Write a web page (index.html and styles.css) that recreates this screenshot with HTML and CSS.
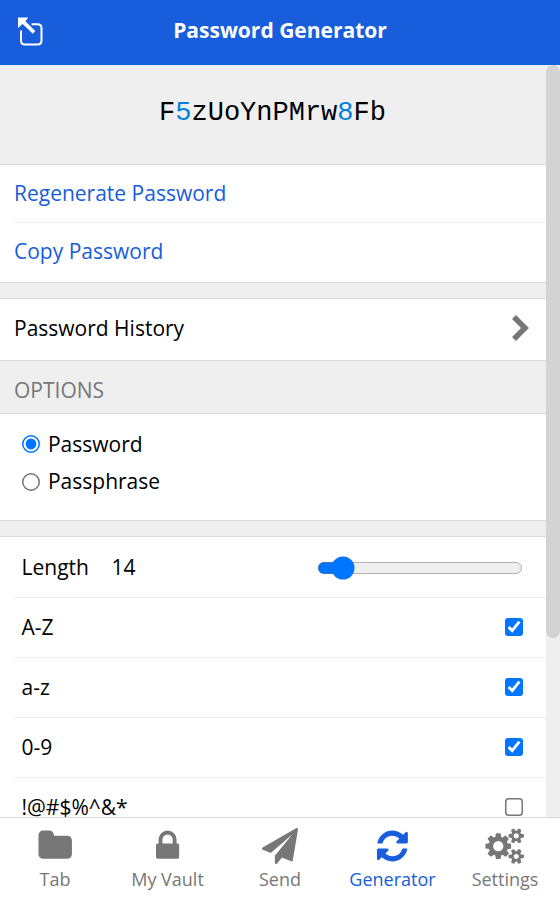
FILE: index.html
```html
<!DOCTYPE html>
<html lang="en">
<head>
<meta charset="utf-8">
<title>Password Generator</title>
<link rel="stylesheet" href="styles.css">
</head>
<body>
<header class="header">
  <button class="popout" aria-label="Pop out">
    <svg width="28" height="30" viewBox="0 0 28 30"><path d="M14.500 7.300H20.500Q24.500 7.300 24.500 11.300V23.500Q24.500 27.500 20.500 27.500H8Q4 27.500 4 23.500V13.500" fill="none" stroke="#fff" stroke-width="2"/><path d="M1 .5H11.300L8.400 4.300 18.300 14 15.800 16.700 5.600 7 1 11Z" fill="#fff"/></svg>
  </button>
  <h1 class="title">Password Generator</h1>
</header>
<div class="body">
  <main class="content">
    <div class="password">F<span class="digit">5</span>zUoYnPMrw<span class="digit">8</span>Fb</div>
    <section class="box">
      <a class="row action">Regenerate Password</a>
      <a class="row action last">Copy Password</a>
    </section>
    <section class="box spaced">
      <a class="row history last">Password History
        <svg class="chevron" viewBox="0 0 18 28"><path d="M3 3 14 14 3 25" fill="none" stroke="#777" stroke-width="5.600"/></svg>
      </a>
    </section>
    <h2 class="section-title">OPTIONS</h2>
    <section class="box types">
      <label class="type"><input class="radio" type="radio" name="type" checked>Password</label>
      <label class="type"><input class="radio low" type="radio" name="type">Passphrase</label>
    </section>
    <section class="box spaced">
      <label class="row option"><span class="name">Length</span><span>14</span><input class="range" type="range" min="5" max="120" value="14"></label>
      <label class="row option">A-Z<input class="check" type="checkbox" checked></label>
      <label class="row option">a-z<input class="check" type="checkbox" checked></label>
      <label class="row option">0-9<input class="check" type="checkbox" checked></label>
      <label class="row option">!@#$%^&amp;*<input class="check" type="checkbox"></label>
    </section>
  </main>
  <div class="scrollbar"><div class="thumb"></div></div>
</div>
<nav class="tabs">
  <a class="tab"><svg class="icon" viewBox="40 0 1664 1792"><path d="M1728 608v704q0 92-66 158t-158 66h-1216q-92 0-158-66t-66-158v-960q0-92 66-158t158-66h320q92 0 158 66t66 158v32h672q92 0 158 66t66 158z"/></svg>Tab</a>
  <a class="tab"><svg class="icon" viewBox="320 0 1152 1792"><path d="M640 768h512v-192q0-106-75-181t-181-75-181 75-75 181v192zm832 96v576q0 40-28 68t-68 28h-960q-40 0-68-28t-28-68v-576q0-40 28-68t68-28h32v-192q0-184 132-316t316-132 316 132 132 316v192h32q40 0 68 28t28 68z"/></svg>My Vault</a>
  <a class="tab"><svg class="icon" viewBox="0 0 1792 1792"><path d="M1764 11q33 24 27 64l-256 1536q-5 29-32 45-14 8-31 8-11 0-24-5l-453-185-242 295q-18 23-49 23-13 0-22-4-19-7-30.500-23.500t-11.500-36.500v-349l864-1059-1069 925-395-162q-37-14-40-55-2-40 32-59l1664-960q15-9 32-9 20 0 36 11z"/></svg>Send</a>
  <a class="tab active"><svg class="icon" viewBox="128 0 1536 1792"><path d="M1639 1056q0 5-1 7-64 268-268 434.500t-478 166.500q-146 0-282.500-55t-243.500-157l-129 129q-19 19-45 19t-45-19-19-45v-448q0-26 19-45t45-19h448q26 0 45 19t19 45-19 45l-137 137q71 66 161 102t187 36q134 0 250-65t186-179q11-17 53-117 8-23 30-23h192q13 0 22.500 9.500t9.500 22.500zm25-800v448q0 26-19 45t-45 19h-448q-26 0-45-19t-19-45 19-45l138-138q-148-137-349-137-134 0-250 65t-186 179q-11 17-53 117-8 23-30 23h-199q-13 0-22.500-9.500t-9.500-22.500v-7q65-268 270-434.500t480-166.500q146 0 284 55.500t245 156.500l130-129q19-19 45-19t45 19 19 45z"/></svg>Generator</a>
  <a class="tab"><svg class="icon" viewBox="30 55 1920 1792"><path d="M896 960q0-106-75-181t-181-75-181 75-75 181 75 181 181 75 181-75 75-181zm768 512q0-52-38-90t-90-38-90 38-38 90q0 53 37.500 90.500t90.500 37.500 90.500-37.500 37.500-90.500zm0-1024q0-52-38-90t-90-38-90 38-38 90q0 53 37.500 90.500t90.500 37.500 90.500-37.500 37.500-90.500zm-384 421v185q0 10-7 19.500t-16 10.500l-155 24q-11 35-32 76 34 48 90 115 7 11 7 20 0 12-7 19-23 30-82.500 89.500t-78.500 59.500q-11 0-21-7l-115-90q-37 19-77 31-11 108-23 155-7 24-30 24h-186q-11 0-20-7.500t-10-17.500l-23-153q-34-10-75-31l-118 89q-7 7-20 7-11 0-21-8-144-133-144-160 0-9 7-19 10-14 41-53t47-61q-23-44-35-82l-152-24q-10-1-17-9.500t-7-19.500v-185q0-10 7-19.500t16-10.500l155-24q11-35 32-76-34-48-90-115-7-11-7-20 0-12 7-20 22-30 82-89t79-59q11 0 21 7l115 90q34-18 77-32 11-108 23-154 7-24 30-24h186q11 0 20 7.500t10 17.500l23 153q34 10 75 31l118-89q8-7 20-7 11 0 21 8 144 133 144 160 0 8-7 19-12 16-42 54t-45 60q23 48 34 82l152 23q10 2 17 10.500t7 19.500zm640 533v140q0 16-149 31-12 27-30 52 51 113 51 138 0 4-4 7-122 71-124 71-8 0-46-47t-52-68q-20 2-30 2t-30-2q-14 21-52 68t-46 47q-2 0-124-71-4-3-4-7 0-25 51-138-18-25-30-52-149-15-149-31v-140q0-16 149-31 13-29 30-52-51-113-51-138 0-4 4-7 4-2 35-20t59-34 30-16q8 0 46 46.500t52 67.500q20-2 30-2t30 2q51-71 92-112l6-2q4 0 124 70 4 3 4 7 0 25-51 138 17 23 30 52 149 15 149 31zm0-1024v140q0 16-149 31-12 27-30 52 51 113 51 138 0 4-4 7-122 71-124 71-8 0-46-47t-52-68q-20 2-30 2t-30-2q-14 21-52 68t-46 47q-2 0-124-71-4-3-4-7 0-25 51-138-18-25-30-52-149-15-149-31v-140q0-16 149-31 13-29 30-52-51-113-51-138 0-4 4-7 4-2 35-20t59-34 30-16q8 0 46 46.500t52 67.500q20-2 30-2t30 2q51-71 92-112l6-2q4 0 124 70 4 3 4 7 0 25-51 138 17 23 30 52 149 15 149 31z"/></svg>Settings</a>
</nav>
</body>
</html>
```
FILE: styles.css
```css
* { box-sizing: border-box; }
body {
  margin: 0;
  height: 897px;
  display: flex;
  flex-direction: column;
  overflow: hidden;
  background: #efefef;
  color: #000;
  font: 21px/30px "Open Sans", sans-serif;
}
.header {
  flex: none;
  height: 65px;
  display: grid;
  grid-template-columns: 80px 1fr 80px;
  align-items: center;
  background: #175ddc;
  color: #fff;
}
.popout {
  width: 28px;
  height: 30px;
  margin: 0 0 1px 17px;
  padding: 0;
  border: 0;
  background: none;
}
.popout svg { display: block; }
.title {
  margin: 0 0 5px;
  font-size: 21px;
  line-height: 30px;
  font-weight: 700;
  text-align: center;
}
.body {
  flex: 1;
  min-height: 0;
  display: flex;
}
.content {
  flex: 1;
  overflow: hidden;
}
.scrollbar { width: 14px; background: #efefef; }
.thumb { height: 573px; border-radius: 7px; background: #d3d3d3; }
.password {
  height: 99px;
  padding: 33px 1px 0 0;
  text-align: center;
  font: 27px/30px "Liberation Mono", monospace;
}
.digit { color: #007fde; }
.box {
  background: #fff;
  border-top: 1px solid #dadada;
  border-bottom: 1px solid #dadada;
}
.spaced { margin-top: 15px; }
.row {
  display: flex;
  align-items: center;
  margin-left: 14px;
  padding-right: 24px;
  border-bottom: 1px solid #efefef;
}
.row.last { border-bottom: 0; }
.action { height: 58px; padding-bottom: 2px; color: #175ddc; }
.action.last { height: 59px; padding-bottom: 3px; }
.history { height: 61px; padding: 0 17px 3px 0; }
.chevron { width: 18px; height: 28px; margin: 0 0 0 auto; }
.section-title {
  margin: 0;
  height: 52px;
  padding: 14px 14px 0;
  font-size: 21px;
  line-height: 30px;
  font-weight: 400;
  color: #777;
}
.types { height: 108px; padding: 11px 22px; }
.type { display: flex; align-items: center; height: 37.500px; }
/* native controls scaled with the rest of the enlarged interface */
.radio { zoom: 1.5; width: 12px; height: 12px; margin: 0 5.330px 0 0; }
.radio.low { margin-top: 1px; }
.option { height: 61px; padding-left: 7.500px; }
.option + .option { height: 60px; padding-bottom: 2px; }
.name { width: 90px; }
.range { zoom: 1.5; width: 137.330px; height: 16px; margin: 1px -0.670px 0 auto; }
.check { zoom: 1.5; width: 12px; height: 12px; margin: 0 -0.670px 0 auto; }
.tabs {
  flex: none;
  height: 80px;
  display: grid;
  grid-template-columns: 110px 115px 110px 115px 110px;
  border-top: 1px solid #dadada;
  background: #fff;
}
.tab {
  display: flex;
  flex-direction: column;
  align-items: center;
  padding-top: 10px;
  font-size: 18px;
  line-height: 24px;
  color: #777;
}
.icon { height: 36px; margin-bottom: 3px; fill: currentColor; overflow: visible; }
.active { color: #175ddc; }
```
